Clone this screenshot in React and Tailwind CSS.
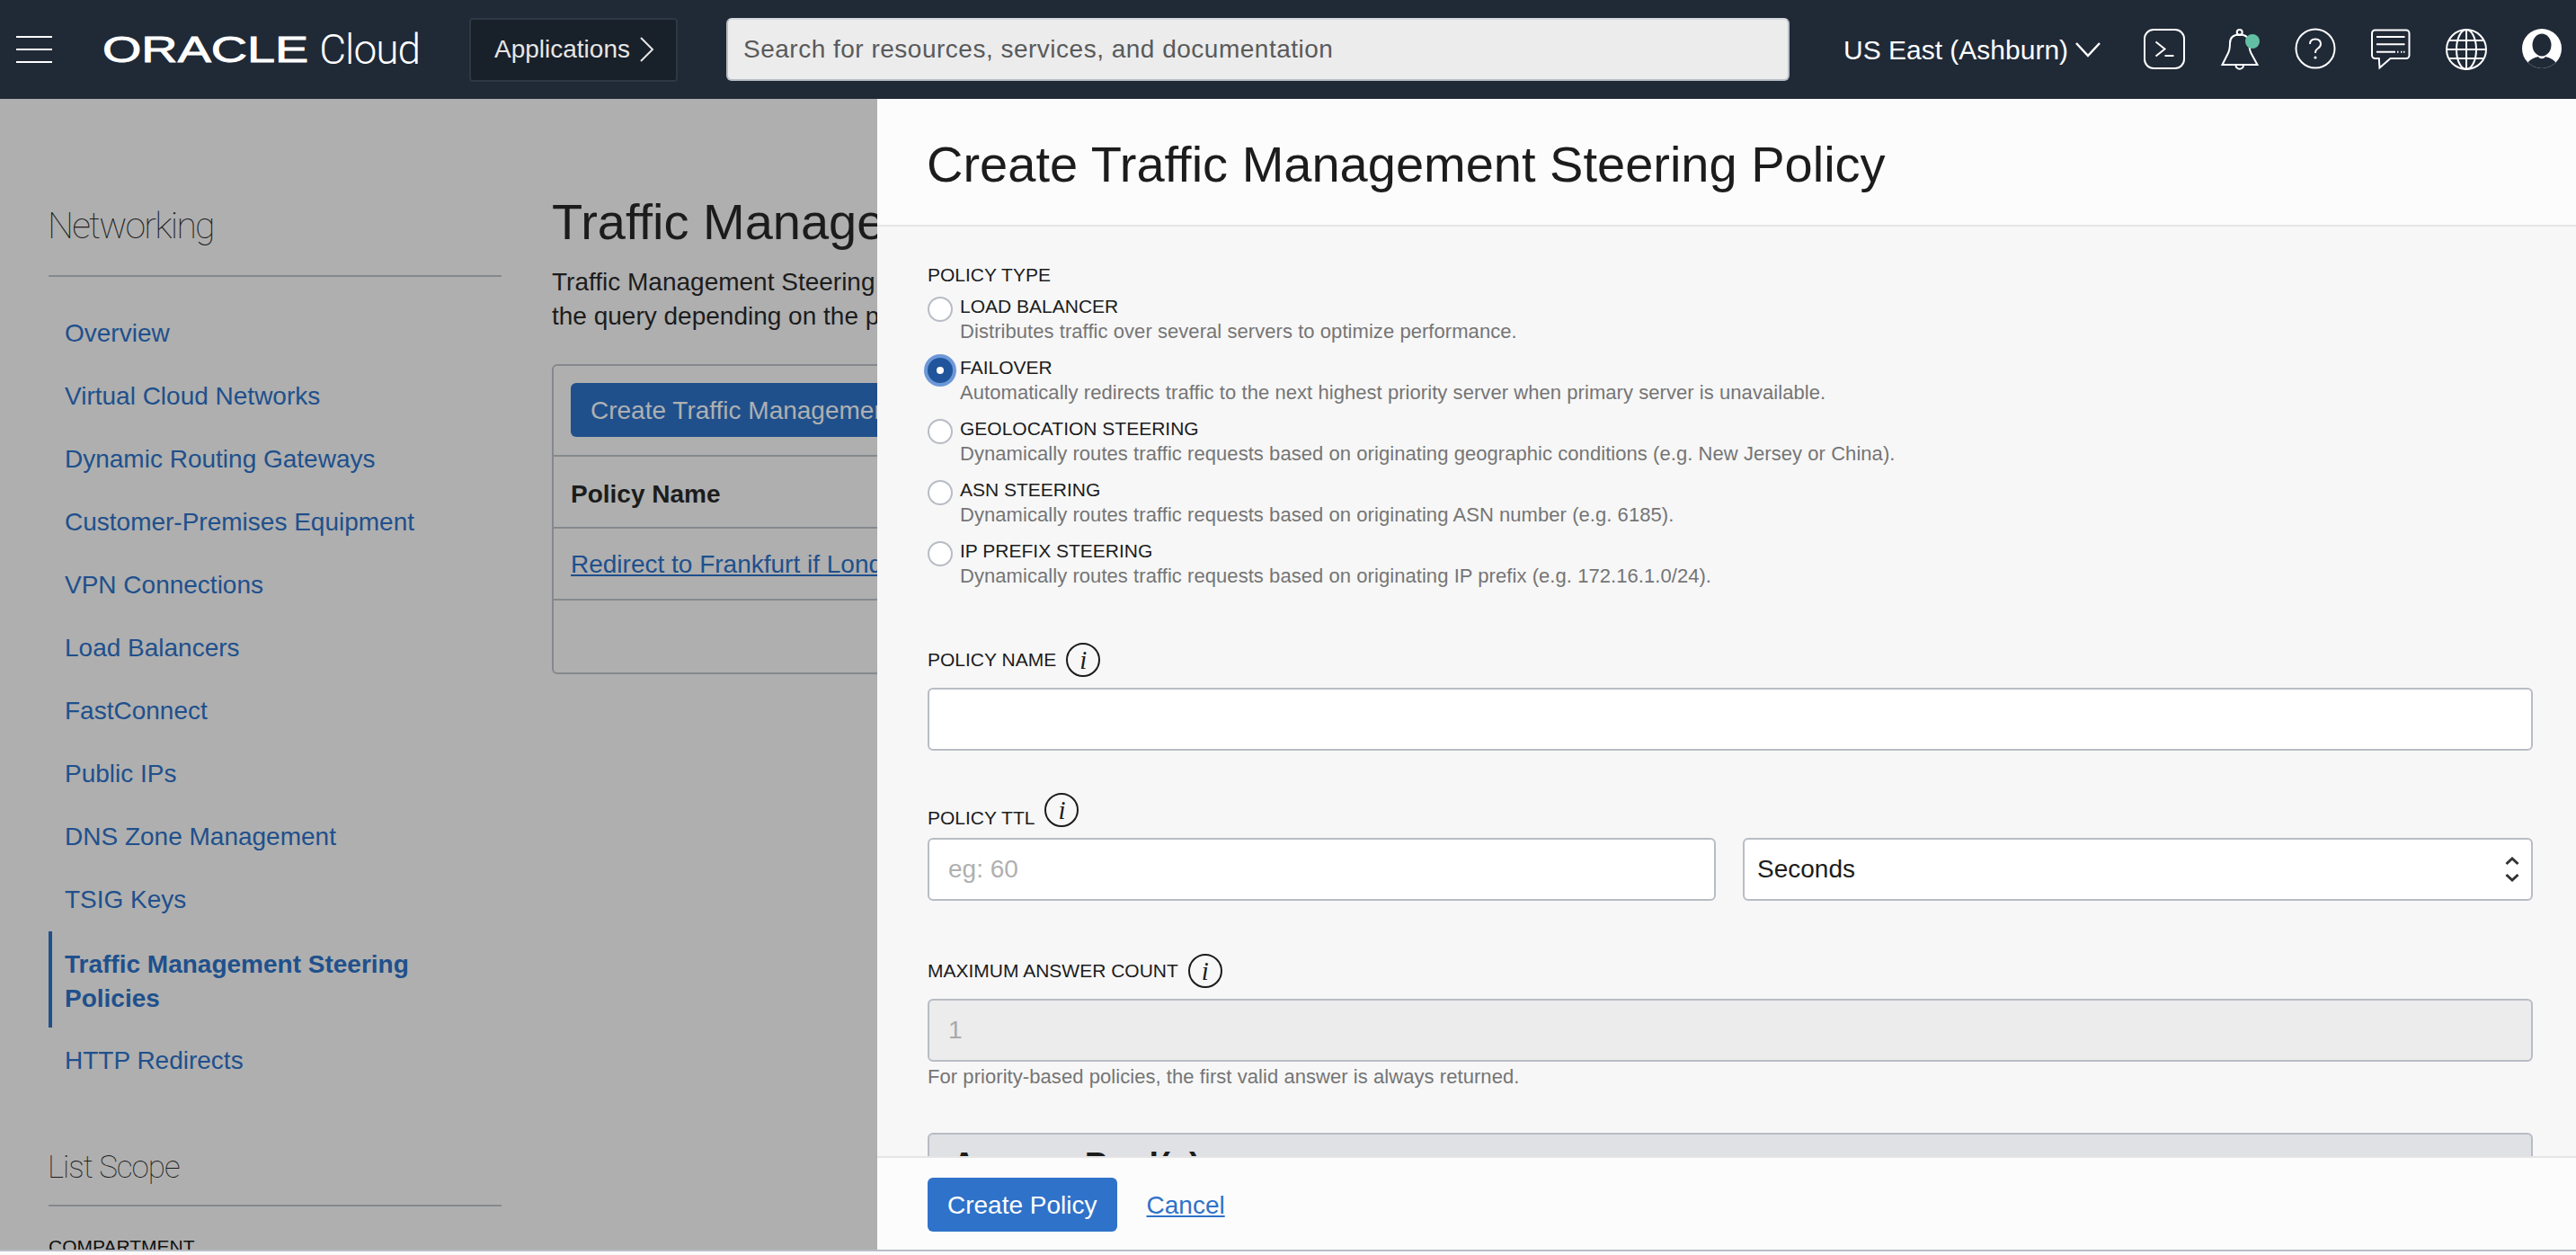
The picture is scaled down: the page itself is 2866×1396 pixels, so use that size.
import React from "react";

const sans = "font-['Liberation_Sans',Arial,sans-serif]";
const light = "font-['Roboto',sans-serif]";

function Terminal() {
  return (
    <svg width="48" height="48" viewBox="0 0 48 48" fill="none" stroke="#fff" strokeWidth="2">
      <rect x="2" y="2" width="44" height="43" rx="10" />
      <path d="M14.5 15.5 L24.5 23.5 L14.5 31.5" />
      <path d="M24.5 31 H34.5" />
    </svg>
  );
}
function Bell() {
  return (
    <svg width="48" height="48" viewBox="0 0 48 48" fill="none" stroke="#fff" strokeWidth="2">
      <circle cx="23.7" cy="5" r="3" />
      <path d="M4.5 41 L11 28 C13 24 13 20 13 17 C13 10 18 7.5 23.7 7.5 C29.4 7.5 34.4 10 34.4 17 C34.4 20 34.4 24 36.4 28 L43.5 41 Z" />
      <path d="M19.5 41.5 C19.5 47 28 47 28 41.5" />
      <circle cx="38" cy="15" r="8" fill="#63bfa3" stroke="none" />
    </svg>
  );
}
function Help() {
  return (
    <svg width="48" height="48" viewBox="0 0 48 48" fill="none" stroke="#fff" strokeWidth="2">
      <circle cx="24" cy="23" r="21.5" />
      <path d="M18 18 C18 14 21 12.5 24 12.5 C27.5 12.5 30 14.5 30 18 C30 21 28 22 26 23.5 C24.5 24.5 24 25.5 24 28" />
      <circle cx="24" cy="33" r="1.6" fill="#fff" stroke="none" />
    </svg>
  );
}
function Chat() {
  return (
    <svg width="48" height="48" viewBox="0 0 48 48" fill="none" stroke="#fff" strokeWidth="2">
      <path d="M6.5 2.5 H41 A3.5 3.5 0 0 1 44.5 6 V30.5 A3.5 3.5 0 0 1 41 34 H23.5 L11.5 44.5 L10.8 34 H6.5 A3.5 3.5 0 0 1 3 30.5 V6 A3.5 3.5 0 0 1 6.5 2.5 Z" />
      <path d="M8 10 H39.5 M8 18.3 H39.5 M8 26.7 H29" />
      <path d="M31 26.7 H32.5 M35 26.7 H36.5 M38 26.7 H39.5" />
    </svg>
  );
}
function Globe() {
  return (
    <svg width="48" height="48" viewBox="0 0 48 48" fill="none" stroke="#fff" strokeWidth="2">
      <circle cx="24" cy="24" r="22" />
      <ellipse cx="24" cy="24" rx="11" ry="22" />
      <path d="M24 2 V46 M5 14 H43 M2 24 H46 M5 34 H43" />
    </svg>
  );
}
function User() {
  return (
    <svg width="48" height="48" viewBox="0 0 48 48">
      <circle cx="24" cy="23" r="22" fill="#fff" />
      <ellipse cx="24" cy="19" rx="10.5" ry="12.5" fill="#202936" />
      <path d="M8.5 38.5 C12 34 17 33 20 32 C22 35 26 35 28 32 C31 33 36 34 39.5 38.5 C31 47 17 47 8.5 38.5 Z" fill="#202936" />
    </svg>
  );
}

function Info() {
  return (
    <span className="flex h-[38px] w-[38px] shrink-0 items-center justify-center rounded-full border-2 border-[#1c1c1c] font-['Liberation_Serif',serif] text-[29px] italic leading-none text-[#1c1c1c]">
      i
    </span>
  );
}

function Radio({ checked, label, desc }) {
  return (
    <div className="flex gap-2">
      {checked ? (
        <span className="mt-[3px] flex h-7 w-7 shrink-0 items-center justify-center rounded-full bg-[#20559b] shadow-[0_0_0_4px_#6d98d8]">
          <span className="h-2 w-2 rounded-full bg-white" />
        </span>
      ) : (
        <span className="mt-[3px] h-7 w-7 shrink-0 rounded-full border-2 border-[#b8bcc4] bg-white" />
      )}
      <div>
        <div className="text-[21px] leading-7 text-[#1c1c1c]">{label}</div>
        <div className="text-[22px] leading-7 tracking-[0.06px] text-[#757575]">{desc}</div>
      </div>
    </div>
  );
}

const nav = [
  "Overview",
  "Virtual Cloud Networks",
  "Dynamic Routing Gateways",
  "Customer-Premises Equipment",
  "VPN Connections",
  "Load Balancers",
  "FastConnect",
  "Public IPs",
  "DNS Zone Management",
  "TSIG Keys",
];

const inputCls = "h-[70px] rounded-md border-2 border-[#b8bcc4] text-[28px] flex items-center";

export default function App() {
  return (
    <div className={`flex h-[1396px] w-[2866px] flex-col overflow-hidden bg-[#fbfbfb] ${sans}`}>
      <header className="flex h-[110px] shrink-0 items-center bg-[#202936] pr-[14px] text-white">
        <div className="ml-[18px] flex w-10 flex-col gap-3">
          <span className="h-0.5 bg-white" />
          <span className="h-0.5 bg-white" />
          <span className="h-0.5 bg-white" />
        </div>
        <div className="ml-[56px] flex w-[353px] items-center">
          <span className="w-[245px] origin-left scale-x-[1.36] text-[41px] font-normal leading-none [-webkit-text-stroke:0.9px_white]">ORACLE</span>
          <span className={`${light} text-[46px] font-light leading-none tracking-[-1px]`}>Cloud</span>
        </div>
        <div className="ml-[55px] flex h-[71px] w-[232px] items-center gap-2.5 rounded border-2 border-[#2e3744] bg-[#18202a] pl-[26px] text-[28px] text-[#e6e6e6]">
          Applications
          <svg width="18" height="28" viewBox="0 0 18 28" fill="none" stroke="#e6e6e6" strokeWidth="2">
            <path d="M2 1 L15 14 L2 27" />
          </svg>
        </div>
        <div className="ml-[54px] flex h-[70px] w-[1183px] items-center rounded-md border-2 border-[#b8bcc4] border-t-[#d5d8dc] bg-[#ececec] pl-[17px] text-[28px] tracking-[0.5px] text-[#5a5a5a]">
          Search for resources, services, and documentation
        </div>
        <div className="ml-[60px] flex w-[288px] items-center gap-2 text-[30px]">
          US East (Ashburn)
          <svg width="28" height="18" viewBox="0 0 28 18" fill="none" stroke="#fff" strokeWidth="2.5">
            <path d="M1 2 L14 16 L27 2" />
          </svg>
        </div>
        <div className="ml-auto flex gap-9">
          <Terminal />
          <Bell />
          <Help />
          <Chat />
          <Globe />
          <User />
        </div>
      </header>

      <div className="relative h-[1280px] shrink-0 overflow-hidden bg-[#afafaf]">
        <div className="flex h-full">
          <aside className="w-[614px] shrink-0 pl-[54px] pr-[56px] pt-[111px]">
            <h2 className={`${light} -ml-px text-[41px] font-thin leading-[60px] tracking-[-1.8px] text-[#1c1c1c]`}>Networking</h2>
            <div className="mt-[25px] h-0.5 bg-[#85898e]" />
            <nav className="mt-[28px] text-[28px] leading-[38px] text-[#20508c]">
              {nav.map((n) => (
                <div key={n} className="py-4 pl-[18px]">{n}</div>
              ))}
              <div className="border-l-4 border-[#20508c] pb-[13px] pl-[14px] pt-[18px] font-bold">
                Traffic Management Steering<br />Policies
              </div>
              <div className="pb-[14px] pl-[18px] pt-[18px]">HTTP Redirects</div>
            </nav>
            <h2 className={`${light} -ml-px mt-[56px] text-[35px] font-thin leading-[60px] tracking-[-1px] text-[#1c1c1c]`}>List Scope</h2>
            <div className="mt-[11px] h-0.5 bg-[#85898e]" />
            <div className="mt-[31px] text-[21px] leading-7 text-[#111]">COMPARTMENT</div>
          </aside>
          <main className="min-w-[1400px] flex-1 pt-[100px] text-[#1c1c1c]">
            <h1 className="text-[56px] leading-[74px]">Traffic Management Steering Policies</h1>
            <p className="mt-[11px] text-[28px] leading-[38px]">
              Traffic Management Steering Policies route DNS traffic based on conditions, returning different answers to<br />
              the query depending on the policy and the origin of the request.
            </p>
            <div className="mt-[34px] h-[345px] rounded-md border-2 border-[#85898e]">
              <div className="h-[101px] border-b-2 border-[#85898e] pl-[19px] pt-[19px]">
                <div className="flex h-[60px] w-fit items-center rounded-md bg-[#20508c] px-[22px] pt-[2px] text-[28px] text-[#aeb0b2]">
                  Create Traffic Management Steering Policy
                </div>
              </div>
              <div className="flex h-[80px] items-center border-b-2 border-[#85898e] pl-[19px] pt-[6px] text-[28px] font-bold">Policy Name</div>
              <div className="flex h-[80px] items-center border-b-2 border-[#85898e] pl-[19px] pt-[2px] text-[28px] text-[#20508c] underline">
                Redirect to Frankfurt if London is down
              </div>
            </div>
          </main>
        </div>

        <div className="absolute bottom-0 left-[976px] right-0 top-0 flex flex-col">
          <div className="flex h-[142px] shrink-0 items-center border-b-2 border-[#e5e5e5] bg-[#fcfcfc] pl-[55px] pt-[6px] text-[56px] text-[#1c1c1c]">
            Create Traffic Management Steering Policy
          </div>
          <div className="min-h-0 flex-1 overflow-hidden bg-[#f7f7f7] pl-[56px] pr-[48px] pt-10">
            <div className="text-[21px] leading-7 text-[#1c1c1c]">POLICY TYPE</div>
            <div className="mt-[7px] flex flex-col gap-3">
              <Radio label="LOAD BALANCER" desc="Distributes traffic over several servers to optimize performance." />
              <Radio checked label="FAILOVER" desc="Automatically redirects traffic to the next highest priority server when primary server is unavailable." />
              <Radio label="GEOLOCATION STEERING" desc="Dynamically routes traffic requests based on originating geographic conditions (e.g. New Jersey or China)." />
              <Radio label="ASN STEERING" desc="Dynamically routes traffic requests based on originating ASN number (e.g. 6185)." />
              <Radio label="IP PREFIX STEERING" desc="Dynamically routes traffic requests based on originating IP prefix (e.g. 172.16.1.0/24)." />
            </div>

            <div className="mt-[60px] flex h-[38px] items-center gap-[11px] text-[21px] text-[#1c1c1c]">
              POLICY NAME <Info />
            </div>
            <div className={`mt-3 bg-white ${inputCls}`} />

            <div className="mt-[47px] flex h-[38px] items-end gap-[11px] text-[21px] leading-[20px] text-[#1c1c1c]">
              POLICY TTL <Info />
            </div>
            <div className="mt-3 flex gap-[30px]">
              <div className={`w-[877px] bg-white pl-[21px] text-[#b0b0b0] ${inputCls}`}>eg: 60</div>
              <div className={`flex-1 justify-between bg-white pl-[14px] pr-[13px] text-[#1c1c1c] ${inputCls}`}>
                Seconds
                <svg width="16" height="30" viewBox="0 0 16 30" fill="none" stroke="#333" strokeWidth="3">
                  <path d="M1.5 9 L8 3 L14.5 9" />
                  <path d="M1.5 21 L8 27 L14.5 21" />
                </svg>
              </div>
            </div>

            <div className="mt-[59px] flex h-[38px] items-center gap-[11px] text-[21px] text-[#1c1c1c]">
              MAXIMUM ANSWER COUNT <Info />
            </div>
            <div className={`mt-3 bg-[#ececec] pl-[21px] text-[#aaa] ${inputCls}`}>1</div>
            <div className="mt-[3px] text-[22px] leading-7 tracking-[0.06px] text-[#757575]">For priority-based policies, the first valid answer is always returned.</div>

            <div className="mt-[48px] h-[100px] rounded-md border-2 border-[#b8bcc4] bg-[#e0e1e5] pl-[25px] pt-[10px] text-[38px] font-bold leading-[48px] text-[#1c1c1c]">
              Answer Pool(s)
            </div>
          </div>
          <div className="flex h-[104px] shrink-0 items-start gap-[33px] border-t-2 border-[#e5e5e5] bg-[#fcfcfc] pl-[56px] pt-[22px]">
            <div className="flex h-[60px] items-center rounded-md bg-[#2f72c9] px-[22px] pt-[2px] text-[28px] text-white">Create Policy</div>
            <div className="flex h-[60px] items-center pt-[2px] text-[28px] text-[#2f72c9] underline">Cancel</div>
          </div>
        </div>
      </div>
      <div className="h-0.5 shrink-0 bg-[#b8bcc4]" />
    </div>
  );
}
